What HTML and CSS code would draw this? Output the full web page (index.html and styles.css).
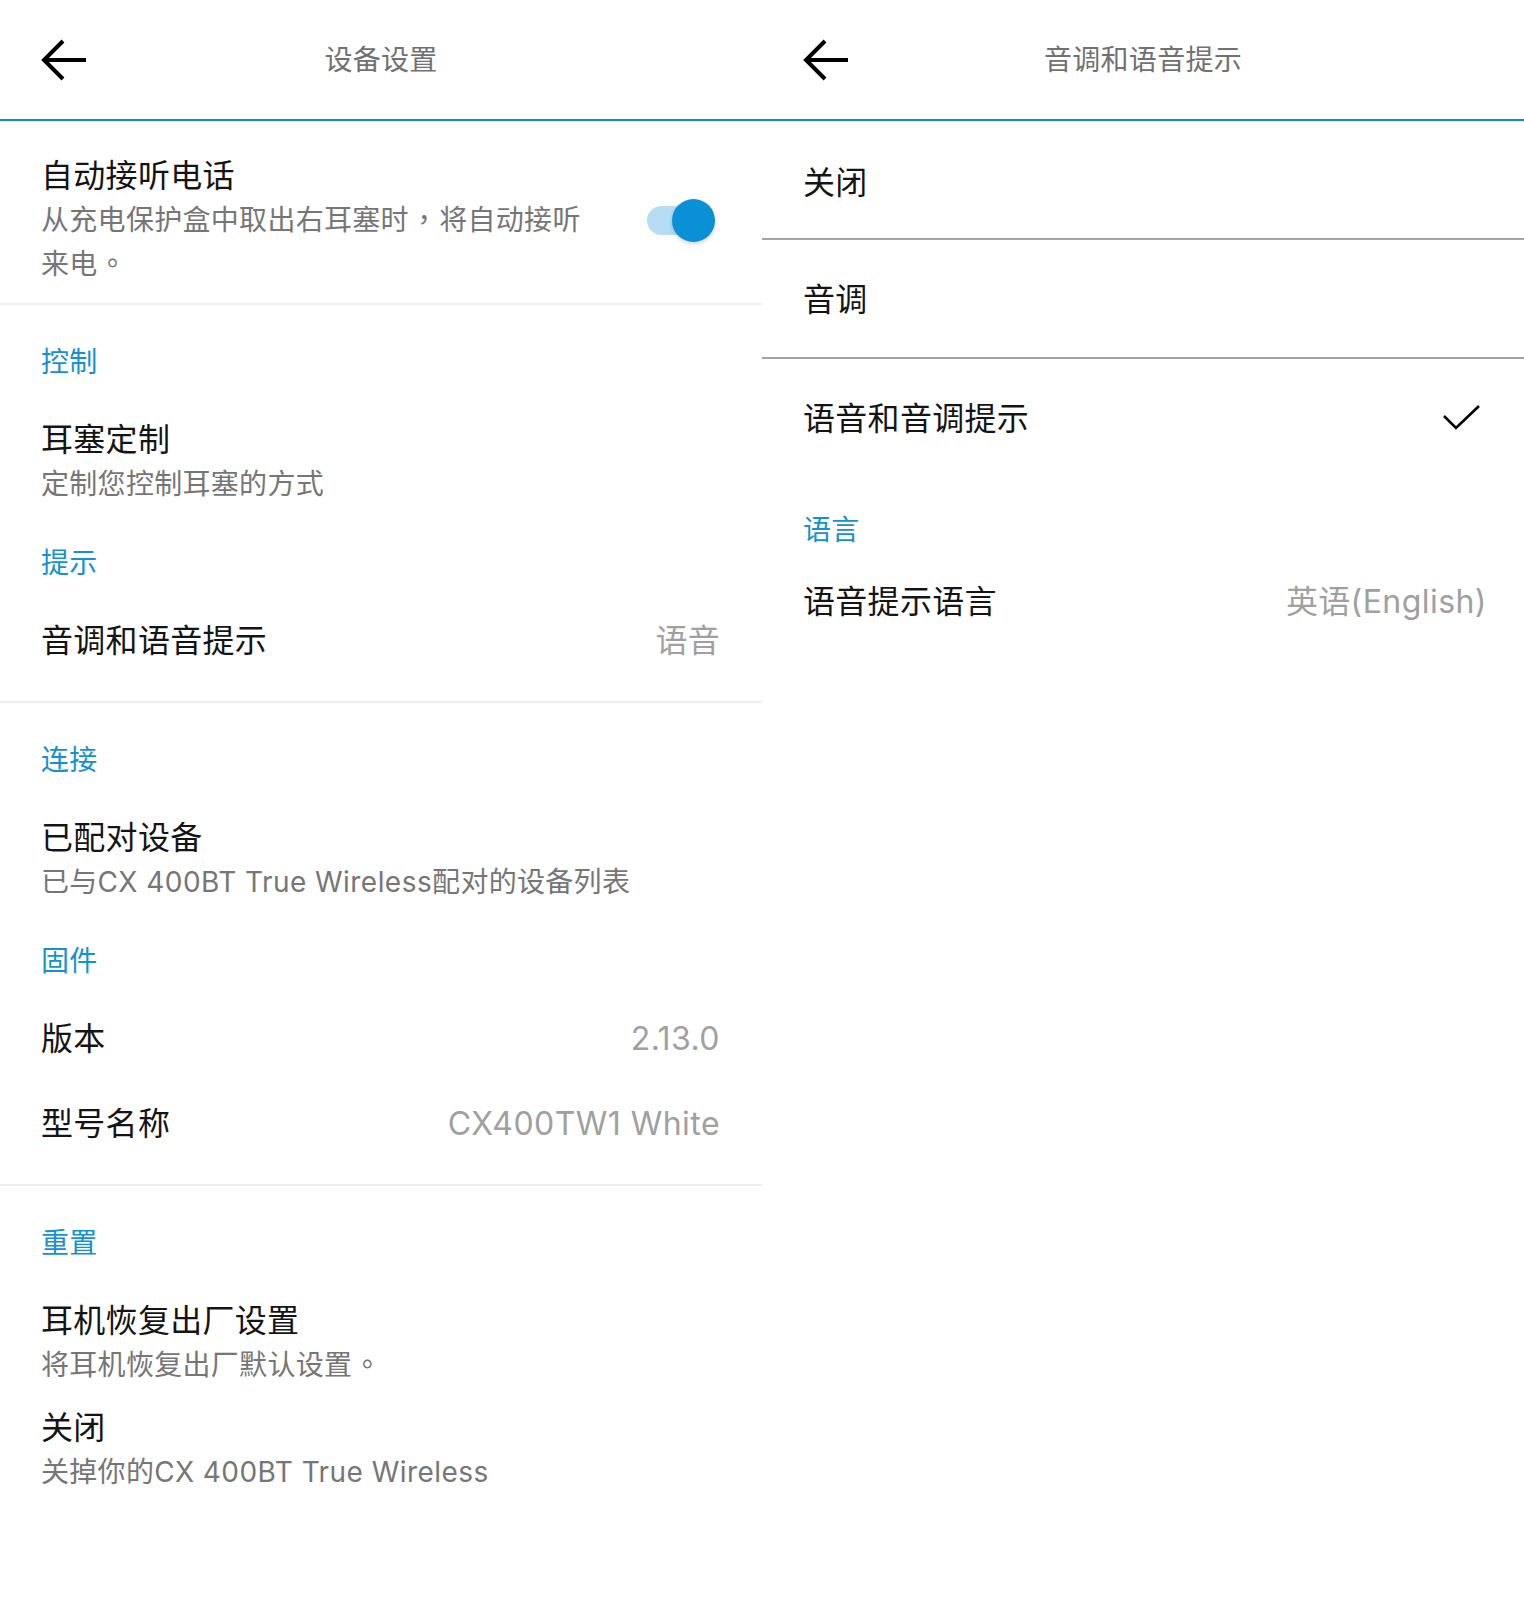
FILE: index.html
```html
<!DOCTYPE html>
<html lang="zh-CN">
<head>
<meta charset="utf-8">
<title>设备设置</title>
<link rel="stylesheet" href="styles.css">
</head>
<body>
<div class="screen">
  <section class="panel">
    <header class="bar">
      <svg class="back" viewBox="0 0 46 42" aria-hidden="true">
        <path d="M45 21H4M22 2L3 21L22 40" fill="none" stroke="#000" stroke-width="4"/>
      </svg>
      <h1 class="bar-title">设备设置</h1>
      <span></span>
    </header>

    <div class="group group-first">
      <div class="toggle-row">
        <div class="text">
          <div class="title">自动接听电话</div>
          <div class="sub">从充电保护盒中取出右耳塞时<span class="punct" lang="zh-TW">，</span>将自动接听<br>来电<span class="punct" lang="zh-TW">。</span></div>
        </div>
        <div class="switch"><span class="track"></span><span class="knob"></span></div>
      </div>
    </div>

    <div class="group">
      <div class="label">控制</div>
      <div class="item has-sub">
        <div class="title">耳塞定制</div>
        <div class="sub">定制您控制耳塞的方式</div>
      </div>
      <div class="label">提示</div>
      <div class="item row">
        <div class="title">音调和语音提示</div>
        <div class="value">语音</div>
      </div>
    </div>

    <div class="group">
      <div class="label">连接</div>
      <div class="item has-sub">
        <div class="title">已配对设备</div>
        <div class="sub">已与<span class="lat">CX 400BT True Wireless</span>配对的设备列表</div>
      </div>
      <div class="label">固件</div>
      <div class="item row">
        <div class="title">版本</div>
        <div class="value lat">2.13.0</div>
      </div>
      <div class="item row">
        <div class="title">型号名称</div>
        <div class="value lat">CX400TW1 White</div>
      </div>
    </div>

    <div class="group group-last">
      <div class="label">重置</div>
      <div class="item has-sub">
        <div class="title">耳机恢复出厂设置</div>
        <div class="sub">将耳机恢复出厂默认设置<span class="punct" lang="zh-TW">。</span></div>
      </div>
      <div class="item has-sub">
        <div class="title">关闭</div>
        <div class="sub">关掉你的<span class="lat">CX 400BT True Wireless</span></div>
      </div>
    </div>
  </section>

  <section class="panel">
    <header class="bar">
      <svg class="back" viewBox="0 0 46 42" aria-hidden="true">
        <path d="M45 21H4M22 2L3 21L22 40" fill="none" stroke="#000" stroke-width="4"/>
      </svg>
      <h1 class="bar-title">音调和语音提示</h1>
      <span></span>
    </header>

    <div class="option option-first">
      <div class="title">关闭</div>
    </div>
    <div class="option">
      <div class="title">音调</div>
    </div>
    <div class="option option-last">
      <div class="title">语音和音调提示</div>
      <svg class="check" viewBox="0 0 40 28" aria-hidden="true">
        <path d="M2 11L14 23L37 1" fill="none" stroke="#000" stroke-width="2.6"/>
      </svg>
    </div>

    <div class="rgroup">
      <div class="label">语言</div>
      <div class="item row">
        <div class="title">语音提示语言</div>
        <div class="value">英语<span class="lat">(English)</span></div>
      </div>
    </div>
  </section>
</div>
</body>
</html>
```

FILE: styles.css
```css
* { box-sizing: border-box; }

html, body {
  margin: 0;
  padding: 0;
  background: #ffffff;
}

body {
  font-family: Inter, "Noto Sans CJK SC", sans-serif;
  color: #141414;
  letter-spacing: 0.3px;
}

.screen {
  display: grid;
  grid-template-columns: 762px 762px;
  width: 1524px;
}

.panel {
  display: flex;
  flex-direction: column;
}

.bar {
  height: 121px;
  border-bottom: 2px solid #0a8bd1;
  display: grid;
  grid-template-columns: 1fr auto 1fr;
  align-items: center;
}

.back {
  width: 46px;
  height: 42px;
  margin-left: 41px;
  display: block;
}

.bar-title {
  margin: 0;
  font-size: 28px;
  font-weight: 400;
  line-height: 40px;
  color: #717171;
}

.group {
  padding: 0 42px 38px 41px;
  border-bottom: 2px solid #eeeeee;
}

.group-first {
  padding-top: 33px;
  padding-bottom: 17px;
}

.group-last {
  border-bottom: none;
}

.toggle-row {
  display: flex;
  align-items: center;
  justify-content: space-between;
}

.toggle-row .text {
  width: 552px;
}

.switch {
  position: relative;
  flex: none;
  width: 68px;
  height: 43px;
  margin-right: 5px;
}

.switch .track {
  position: absolute;
  left: 0;
  top: 7px;
  width: 56px;
  height: 29px;
  border-radius: 15px;
  background: #b6ddf3;
}

.switch .knob {
  position: absolute;
  right: 0;
  top: 0;
  width: 43px;
  height: 43px;
  border-radius: 50%;
  background: #0a90d6;
  box-shadow: 0 2px 4px rgba(0, 0, 0, 0.18);
}

.label {
  font-size: 28px;
  line-height: 40px;
  color: #1590d2;
  margin-top: 37px;
}

.label + .item {
  margin-top: 36px;
}

.item + .item {
  margin-top: 41px;
}

.item.has-sub + .item {
  margin-top: 19px;
}

.title {
  font-size: 32px;
  line-height: 44px;
  color: #141414;
}

.sub {
  font-size: 28px;
  line-height: 44px;
  color: #767676;
}

.lat {
  letter-spacing: 0.45px;
}

.punct {
  font-family: "Noto Sans CJK TC", sans-serif;
  line-height: 36px;
  margin-left: 1px;
  margin-right: 1px;
}

.row {
  display: flex;
  justify-content: space-between;
  align-items: center;
}

.value {
  font-size: 32px;
  line-height: 44px;
  color: #a0a0a0;
}

.option {
  display: flex;
  align-items: center;
  justify-content: space-between;
  padding: 38px 42px 35px 41px;
  border-bottom: 2px solid #a3a3a3;
}

.option-first {
  padding-top: 40px;
  padding-bottom: 33px;
}

.option-last {
  border-bottom: none;
}

.check {
  width: 40px;
  height: 28px;
  display: block;
}

.rgroup {
  padding: 0 37px 0 41px;
}

.rgroup .label {
  margin-top: 34px;
}

.rgroup .label + .item {
  margin-top: 30px;
}
```
